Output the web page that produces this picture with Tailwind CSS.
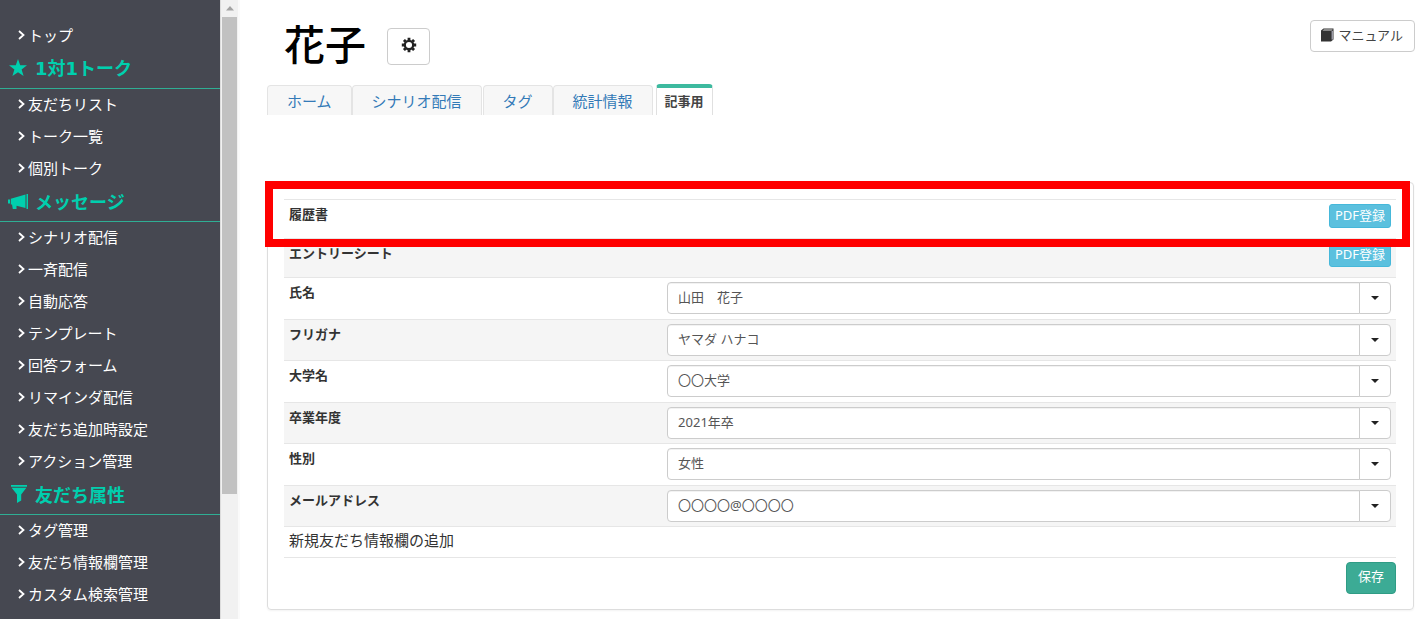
<!DOCTYPE html>
<html lang="ja">
<head>
<meta charset="utf-8">
<meta name="viewport" content="width=device-width, initial-scale=1">
<title>花子</title>
<script src="https://cdn.jsdelivr.net/npm/@tailwindcss/browser@4"></script>
</head>
<body class="flex h-screen overflow-hidden bg-white font-['Noto_Sans','Noto_Sans_CJK_JP',sans-serif] text-[13px] leading-5 text-[#333]">
<svg class="hidden" aria-hidden="true">
  <symbol id="chev" viewBox="0 0 8 10"><path d="M1 1 5.500 5 1 9" fill="none" stroke="currentColor" stroke-width="1.800"/></symbol>
</svg>

<nav class="w-[220px] shrink-0 overflow-hidden bg-[#464851] pt-5 text-[15px] whitespace-nowrap text-white">
  <a href="#" class="flex h-8 items-center gap-0.5 pb-0.5 pl-[18px]"><svg class="h-2.5 w-2"><use href="#chev"/></svg>トップ</a>
  <h2 class="flex h-[37px] items-start gap-2 border-b border-[#2fae94] pt-[5px] pl-[9px] text-lg leading-6 font-bold text-[#00cfae]">
    <svg class="mt-0.5 size-[18px]" viewBox="0 0 18 18" fill="currentColor"><path d="M9 0l2.200 6.300H18l-5.400 4.200L14.600 17 9 13.200 3.400 17l2-6.500L0 6.300h6.800z"/></svg>
    <span class="font-['DejaVu_Sans','Noto_Sans_CJK_JP',sans-serif]">1対1トーク</span></h2>
  <a href="#" class="flex h-8 items-center gap-0.5 pb-0.5 pl-[18px]"><svg class="h-2.5 w-2"><use href="#chev"/></svg>友だちリスト</a>
  <a href="#" class="flex h-8 items-center gap-0.5 pb-0.5 pl-[18px]"><svg class="h-2.5 w-2"><use href="#chev"/></svg>トーク一覧</a>
  <a href="#" class="flex h-8 items-center gap-0.5 pb-0.5 pl-[18px]"><svg class="h-2.5 w-2"><use href="#chev"/></svg>個別トーク</a>
  <h2 class="flex h-[37px] items-start gap-[7px] border-b border-[#2fae94] pt-[5px] pl-2 text-lg leading-6 font-bold text-[#00cfae]">
    <svg class="mt-1 h-4 w-5" viewBox="0 0 20 16" fill="currentColor"><path d="M0 5.500h2v4H0zM2.800 4.800 17.500.5V14L8.500 11.800V15H4.800L4 10.500H2.800zM18.500 0H20v15h-1.500z"/></svg>
    メッセージ</h2>
  <a href="#" class="flex h-8 items-center gap-0.5 pb-0.5 pl-[18px]"><svg class="h-2.5 w-2"><use href="#chev"/></svg>シナリオ配信</a>
  <a href="#" class="flex h-8 items-center gap-0.5 pb-0.5 pl-[18px]"><svg class="h-2.5 w-2"><use href="#chev"/></svg>一斉配信</a>
  <a href="#" class="flex h-8 items-center gap-0.5 pb-0.5 pl-[18px]"><svg class="h-2.5 w-2"><use href="#chev"/></svg>自動応答</a>
  <a href="#" class="flex h-8 items-center gap-0.5 pb-0.5 pl-[18px]"><svg class="h-2.5 w-2"><use href="#chev"/></svg>テンプレート</a>
  <a href="#" class="flex h-8 items-center gap-0.5 pb-0.5 pl-[18px]"><svg class="h-2.5 w-2"><use href="#chev"/></svg>回答フォーム</a>
  <a href="#" class="flex h-8 items-center gap-0.5 pb-0.5 pl-[18px]"><svg class="h-2.5 w-2"><use href="#chev"/></svg>リマインダ配信</a>
  <a href="#" class="flex h-8 items-center gap-0.5 pb-0.5 pl-[18px]"><svg class="h-2.5 w-2"><use href="#chev"/></svg>友だち追加時設定</a>
  <a href="#" class="flex h-8 items-center gap-0.5 pb-0.5 pl-[18px]"><svg class="h-2.5 w-2"><use href="#chev"/></svg>アクション管理</a>
  <h2 class="flex h-[37px] items-start gap-2 border-b border-[#2fae94] pt-[5px] pl-[9px] text-lg leading-6 font-bold text-[#00cfae]">
    <svg class="mt-0.5 size-[18px]" viewBox="0 0 18 18" fill="currentColor"><path d="M2 0h16v1.800H2zM2.600 2.800h14.800L12.200 9.500v6L8 18V9.500z"/></svg>
    友だち属性</h2>
  <a href="#" class="flex h-8 items-center gap-0.5 pb-0.5 pl-[18px]"><svg class="h-2.5 w-2"><use href="#chev"/></svg>タグ管理</a>
  <a href="#" class="flex h-8 items-center gap-0.5 pb-0.5 pl-[18px]"><svg class="h-2.5 w-2"><use href="#chev"/></svg>友だち情報欄管理</a>
  <a href="#" class="flex h-8 items-center gap-0.5 pb-0.5 pl-[18px]"><svg class="h-2.5 w-2"><use href="#chev"/></svg>カスタム検索管理</a>
</nav>

<div class="flex w-5 shrink-0 flex-col items-center border-r-2 border-l border-l-[#dcdcdc] border-r-[#fafafa] bg-[#f1f1f1]" aria-hidden="true">
  <svg class="h-[17px] w-4 shrink-0" viewBox="0 0 16 17"><path d="M4 10.500 8 6l4 4.500z" fill="#a3a3a3"/></svg>
  <div class="h-[77%] w-[15px] bg-[#c1c1c1]"></div>
</div>

<main class="min-w-0 grow pr-[14px] pl-[27px]">
  <header class="flex h-[84px] items-start">
    <h1 class="pt-[19px] pl-[17px] text-[41px] leading-[50px] font-medium text-black">花子</h1>
    <button type="button" aria-label="設定" class="mt-7 ml-[21px] flex h-[37px] w-[43px] items-center justify-center rounded border border-[#ccc] bg-white">
      <svg class="mb-1 size-4" viewBox="0 0 16 16" fill="none" stroke="#222"><circle cx="8" cy="8" r="4.200" stroke-width="2.300"/><path stroke-width="2.800" d="M8 .8v2.500M8 12.700v2.500M.8 8h2.500M12.700 8h2.500M2.900 2.900l1.700 1.700M11.400 11.400l1.700 1.700M2.900 13.100l1.700-1.700M11.400 4.600l1.700-1.700"/></svg>
    </button>
    <button type="button" class="mt-5 -mr-px ml-auto flex h-8 items-center gap-1 rounded border border-[#ccc] bg-white pr-[11px] pb-[3px] pl-2.5 text-[#444]">
      <svg class="h-3.5 w-[13px]" viewBox="0 0 13 14"><path d="M0 2.500 2.500.5H12.500v11L10 13.500H0z" fill="#333"/><path d="M1.500 2.500 3 1.500h8.800l-1.300 1z" fill="#ddd"/><path d="M11.200 2.800v8.800" stroke="#ccd" stroke-width="1"/></svg>
      マニュアル</button>
  </header>

  <nav class="flex h-[31px] items-end text-[15px] text-[#337ab7]">
    <a href="#" class="h-[30px] rounded-t border border-b-0 border-[#e4e4e4] bg-[#f7f7f7] px-[19px] leading-[30px]">ホーム</a>
    <a href="#" class="h-[30px] rounded-t border border-b-0 border-[#e4e4e4] bg-[#f7f7f7] px-[19px] leading-[30px]">シナリオ配信</a>
    <a href="#" class="ml-px h-[30px] rounded-t border border-b-0 border-[#e4e4e4] bg-[#f7f7f7] px-[19px] leading-[30px]">タグ</a>
    <a href="#" class="h-[30px] rounded-t border border-b-0 border-[#e4e4e4] bg-[#f7f7f7] px-[19px] leading-[30px]">統計情報</a>
    <a href="#" aria-current="page" class="ml-[3px] h-[31px] rounded-t border border-t-4 border-b-0 border-[#e0e0e0] border-t-[#3dba9f] bg-white px-2 text-[13px] leading-[26px] font-bold text-[#444]">記事用</a>
  </nav>

  <form class="relative mt-[67px] rounded-sm border border-[#ddd] pt-4 pr-[17px] pb-[15px] pl-4 shadow-xs">
    <table class="w-full table-fixed border-collapse">
      <colgroup><col class="w-[34%]"><col></colgroup>
      <tbody>
        <tr class="h-[39px] border-t border-[#e6e6e6]">
          <th scope="row" class="px-[5px] pt-1 text-left align-top">履歴書</th>
          <td class="px-[5px] pt-1 text-right align-top"><button type="button" class="h-6 rounded-[3px] border border-[#46b8da] bg-[#5bc0de] px-[5px] pb-0.5 leading-5 text-white">PDF登録</button></td>
        </tr>
        <tr class="h-[39px] border-t border-[#e6e6e6] bg-[#f5f5f5]">
          <th scope="row" class="px-[5px] pt-1 text-left align-top">エントリーシート</th>
          <td class="px-[5px] pt-1 text-right align-top"><button type="button" class="h-6 rounded-[3px] border border-[#46b8da] bg-[#5bc0de] px-[5px] pb-0.5 leading-5 text-white">PDF登録</button></td>
        </tr>
        <tr class="h-[42px] border-t border-[#e6e6e6]">
          <th scope="row" class="px-[5px] pt-1 text-left align-top"><label for="f1">氏名</label></th>
          <td class="px-[5px] pt-1 pb-[5px]"><div class="flex"><input id="f1" value="山田　花子" class="h-8 min-w-0 grow rounded-l border border-[#ccc] bg-white px-2.5 pb-1 text-[#555] inset-shadow-2xs"><button type="button" aria-label="氏名の候補" class="-ml-px flex h-8 w-8 items-center justify-center rounded-r border border-[#ccc] bg-white"><svg class="h-1 w-2" viewBox="0 0 8 4"><path d="M0 0h8L4 4z" fill="#222"/></svg></button></div></td>
        </tr>
        <tr class="h-[41px] border-t border-[#e6e6e6] bg-[#f5f5f5]">
          <th scope="row" class="px-[5px] pt-1 text-left align-top"><label for="f2">フリガナ</label></th>
          <td class="px-[5px] pt-1 pb-1"><div class="flex"><input id="f2" value="ヤマダ ハナコ" class="h-8 min-w-0 grow rounded-l border border-[#ccc] bg-white px-2.5 pb-1 text-[#555] inset-shadow-2xs"><button type="button" aria-label="フリガナの候補" class="-ml-px flex h-8 w-8 items-center justify-center rounded-r border border-[#ccc] bg-white"><svg class="h-1 w-2" viewBox="0 0 8 4"><path d="M0 0h8L4 4z" fill="#222"/></svg></button></div></td>
        </tr>
        <tr class="h-[42px] border-t border-[#e6e6e6]">
          <th scope="row" class="px-[5px] pt-1 text-left align-top"><label for="f3">大学名</label></th>
          <td class="px-[5px] pt-1 pb-[5px]"><div class="flex"><input id="f3" value="〇〇大学" class="h-8 min-w-0 grow rounded-l border border-[#ccc] bg-white px-2.5 pb-1 text-[#555] inset-shadow-2xs"><button type="button" aria-label="大学名の候補" class="-ml-px flex h-8 w-8 items-center justify-center rounded-r border border-[#ccc] bg-white"><svg class="h-1 w-2" viewBox="0 0 8 4"><path d="M0 0h8L4 4z" fill="#222"/></svg></button></div></td>
        </tr>
        <tr class="h-[41px] border-t border-[#e6e6e6] bg-[#f5f5f5]">
          <th scope="row" class="px-[5px] pt-1 text-left align-top"><label for="f4">卒業年度</label></th>
          <td class="px-[5px] pt-1 pb-1"><div class="flex"><input id="f4" value="2021年卒" class="h-8 min-w-0 grow rounded-l border border-[#ccc] bg-white px-2.5 pb-1 text-[#555] inset-shadow-2xs"><button type="button" aria-label="卒業年度の候補" class="-ml-px flex h-8 w-8 items-center justify-center rounded-r border border-[#ccc] bg-white"><svg class="h-1 w-2" viewBox="0 0 8 4"><path d="M0 0h8L4 4z" fill="#222"/></svg></button></div></td>
        </tr>
        <tr class="h-[42px] border-t border-[#e6e6e6]">
          <th scope="row" class="px-[5px] pt-1 text-left align-top"><label for="f5">性別</label></th>
          <td class="px-[5px] pt-1 pb-[5px]"><div class="flex"><input id="f5" value="女性" class="h-8 min-w-0 grow rounded-l border border-[#ccc] bg-white px-2.5 pb-1 text-[#555] inset-shadow-2xs"><button type="button" aria-label="性別の候補" class="-ml-px flex h-8 w-8 items-center justify-center rounded-r border border-[#ccc] bg-white"><svg class="h-1 w-2" viewBox="0 0 8 4"><path d="M0 0h8L4 4z" fill="#222"/></svg></button></div></td>
        </tr>
        <tr class="h-[41px] border-t border-[#e6e6e6] bg-[#f5f5f5]">
          <th scope="row" class="px-[5px] pt-1 text-left align-top"><label for="f6">メールアドレス</label></th>
          <td class="px-[5px] pt-1 pb-1"><div class="flex"><input id="f6" value="〇〇〇〇@〇〇〇〇" class="h-8 min-w-0 grow rounded-l border border-[#ccc] bg-white px-2.5 pb-1 text-[#555] inset-shadow-2xs"><button type="button" aria-label="メールアドレスの候補" class="-ml-px flex h-8 w-8 items-center justify-center rounded-r border border-[#ccc] bg-white"><svg class="h-1 w-2" viewBox="0 0 8 4"><path d="M0 0h8L4 4z" fill="#222"/></svg></button></div></td>
        </tr>
        <tr class="h-[31px] border-y border-[#e6e6e6]">
          <td colspan="2" class="px-[5px] pb-1 text-[15px]"><a href="#">新規友だち情報欄の追加</a></td>
        </tr>
      </tbody>
    </table>
    <div class="flex justify-end pt-1"><button type="submit" class="h-8 rounded border border-[#2f9c85] bg-[#3cab95] px-[11px] pb-1 text-white">保存</button></div>
    <div class="pointer-events-none absolute -top-0.5 right-[3px] -left-[3px] h-[66px] border-8 border-[#f00]"></div>
  </form>
</main>
</body>
</html>
